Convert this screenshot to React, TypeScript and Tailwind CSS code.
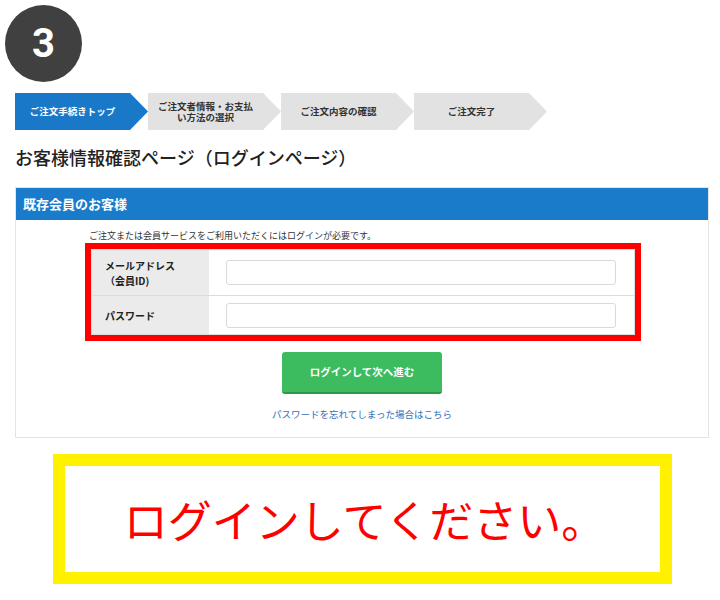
const jp = "font-['Noto_Sans_CJK_JP','Noto_Sans',sans-serif]";

const steps = [
  { label: 'ご注文手続きトップ', active: true },
  { label: 'ご注文者情報・お支払\nい方法の選択', active: false },
  { label: 'ご注文内容の確認', active: false },
  { label: 'ご注文完了', active: false },
];

function StepBar() {
  return (
    <div className="ml-[15px] mt-[11px] flex h-[37px]">
      {steps.map((s) => (
        <div
          key={s.label}
          className={`flex h-full w-[133px] items-center justify-center whitespace-pre-line pr-[18px] text-center text-[9.5px] font-bold leading-[11px] [clip-path:polygon(0_0,calc(100%-18px)_0,100%_50%,calc(100%-18px)_100%,0_100%)] ${
            s.active ? 'bg-[#1a78c9] text-white' : 'bg-[#e2e2e2] text-[#333]'
          }`}
        >
          {s.label}
        </div>
      ))}
    </div>
  );
}

function LoginPanel() {
  return (
    <section className="ml-[15px] mt-[18px] w-[694px] border border-[#e3e3e3] bg-white">
      <div className="flex h-[32px] items-center bg-[#1b7bcb] pl-[7px] text-[13px] font-bold text-white">既存会員のお客様</div>
      <div className="ml-[69px] w-[556px] pt-[10px]">
        <p className="pl-[4px] text-[9px] leading-[12px] text-[#333]">ご注文または会員サービスをご利用いただくにはログインが必要です。</p>
        <div className="mt-[1px] border-[6px] border-[#ff0000]">
          <div className="border border-[#dcdcdc]">
            <div className="flex h-[46px] border-b border-[#dcdcdc]">
              <div className="flex w-[117px] flex-col justify-center bg-[#ebebeb] pl-[13px] text-[10px] font-bold leading-[15px] text-[#222]">
                <span>メールアドレス</span>
                <span>（会員ID)</span>
              </div>
              <div className="flex flex-1 items-center pl-[17px] pr-[18px]">
                <input className="h-[25px] w-full rounded-[3px] border border-[#dadada] bg-white outline-none" />
              </div>
            </div>
            <div className="flex h-[38px]">
              <div className="flex w-[117px] items-center bg-[#ebebeb] pl-[13px] text-[10px] font-bold text-[#222]">パスワード</div>
              <div className="flex flex-1 items-center pl-[17px] pr-[18px]">
                <input type="password" className="h-[25px] w-full rounded-[3px] border border-[#dadada] bg-white outline-none" />
              </div>
            </div>
          </div>
        </div>
      </div>
      <div className="flex flex-col items-center pb-[16px]">
        <button className="mt-[11px] h-[42px] w-[160px] rounded-[3px] border-b-2 border-[#2a9a48] bg-[#3dbb5f] text-[10.5px] font-bold text-white">
          ログインして次へ進む
        </button>
        <a className="mt-[13px] text-[9.5px] leading-[14px] text-[#2f70b9]">パスワードを忘れてしまった場合はこちら</a>
      </div>
    </section>
  );
}

export default function App() {
  return (
    <div className={`h-[600px] w-[720px] overflow-hidden bg-white ${jp}`}>
      <div className="ml-[5px] pt-[5px]">
        <div className="flex h-[77px] w-[77px] items-center justify-center rounded-full bg-[#404040] font-['Roboto','Noto_Sans',sans-serif] text-[40px] font-bold text-white">
          3
        </div>
      </div>
      <StepBar />
      <h1 className="ml-[15px] mt-[15px] text-[18px] font-medium leading-[24px] text-[#222]">お客様情報確認ページ（ログインページ）</h1>
      <LoginPanel />
      <div className="ml-[53px] mt-[16px] flex h-[130px] w-[619px] items-center justify-center border-[12px] border-[#fff100] pl-[4px]">
        <span className="text-[44px] leading-none text-[#ff0000]">ログインしてください。</span>
      </div>
    </div>
  );
}
